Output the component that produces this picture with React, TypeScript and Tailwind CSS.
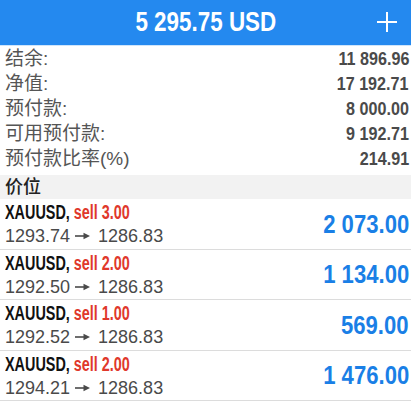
import React from 'react';

const font = "font-['Liberation_Sans','Noto_Sans_CJK_SC',sans-serif]";

const summary = [
    { label: '结余:', value: '11 896.96' },
    { label: '净值:', value: '17 192.71' },
    { label: '预付款:', value: '8 000.00' },
    { label: '可用预付款:', value: '9 192.71' },
    { label: '预付款比率(%)', value: '214.91' },
];

const positions = [
    { symbol: 'XAUUSD', lots: '3.00', open: '1293.74', price: '1286.83', profit: '2 073.00' },
    { symbol: 'XAUUSD', lots: '2.00', open: '1292.50', price: '1286.83', profit: '1 134.00' },
    { symbol: 'XAUUSD', lots: '1.00', open: '1292.52', price: '1286.83', profit: '569.00' },
    { symbol: 'XAUUSD', lots: '2.00', open: '1294.21', price: '1286.83', profit: '1 476.00' },
];

function Arrow() {
    return (
        <svg width="15" height="8" viewBox="0 0 15 8" className="ml-[5px] mr-[8px] shrink-0">
            <line x1="0" y1="4" x2="10" y2="4" stroke="#4a4a4a" strokeWidth="1.6" />
            <polygon points="8.5,0.8 15,4 8.5,7.2" fill="#4a4a4a" />
        </svg>
    );
}

export default function App() {
    return (
        <div className={`w-[411px] h-[401px] overflow-hidden bg-white ${font}`}>
            {/* Header */}
            <header className="relative h-[45px] bg-[#2489ef] flex items-center justify-center border-b border-[#cfe5fb] box-content">
                <span className="inline-block scale-x-[0.83] text-white font-bold text-[27px] leading-none">
                    5 295.75 USD
                </span>
                <svg width="20" height="20" viewBox="0 0 20 20" className="absolute right-[14px] top-[12px]">
                    <line x1="10" y1="0" x2="10" y2="20" stroke="white" strokeWidth="2" />
                    <line x1="0" y1="10" x2="20" y2="10" stroke="white" strokeWidth="2" />
                </svg>
            </header>

            {/* Account summary */}
            <div className="pb-[4px]">
                {summary.map((row) => (
                    <div key={row.label} className="h-[25px] flex items-center justify-between pl-[5px] pr-[2px]">
                        <span className="text-[19px] text-[#555] leading-none">{row.label}</span>
                        <span className="inline-block origin-right scale-x-[0.85] text-[19px] font-bold text-[#4a4a4a] leading-none">
                            {row.value}
                        </span>
                    </div>
                ))}
            </div>

            {/* Section title */}
            <div className="h-[24px] bg-[#f2f2f2] flex items-center pl-[5px]">
                <span className="text-[18px] text-[#222] font-medium leading-none">价位</span>
            </div>

            {/* Positions */}
            {positions.map((p, i) => (
                <div key={i} className="h-[50.5px] flex items-center justify-between border-b border-[#dcdcdc] pl-[5px] pr-[2px]">
                    <div className="flex flex-col gap-[5px]">
                        <span className="inline-block origin-left scale-x-[0.72] text-[20px] font-bold leading-none whitespace-nowrap">
                            <span className="text-[#111]">{p.symbol}, </span>
                            <span className="text-[#e0382b]">sell {p.lots}</span>
                        </span>
                        <div className="flex items-center text-[18px] text-[#4a4a4a] leading-none">
                            <span>{p.open}</span>
                            <Arrow />
                            <span>{p.price}</span>
                        </div>
                    </div>
                    <span className="inline-block origin-right scale-x-[0.85] text-[26px] font-bold text-[#1a7fe6] leading-none">
                        {p.profit}
                    </span>
                </div>
            ))}
        </div>
    );
}
